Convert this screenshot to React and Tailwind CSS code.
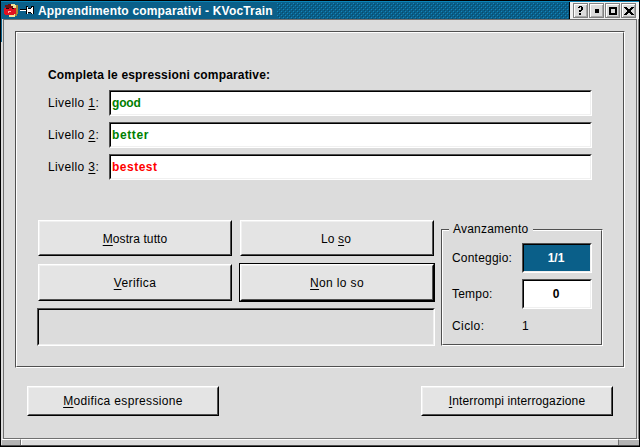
import React from "react";

const font = "font-['Liberation_Sans',Arial,sans-serif]";

function Label({ children, bold, className = "" }) {
  return (
    <span className={`inline-block whitespace-nowrap text-[12px] leading-[14px] ${bold ? "font-bold" : ""} ${className}`}>
      {children}
    </span>
  );
}

function U({ children }) {
  return <span className="underline underline-offset-2 decoration-1">{children}</span>;
}

function Sunken({ className = "", inner = "bg-white", children }) {
  return (
    <div className={`border border-t-[#505050] border-l-[#505050] border-r-white border-b-white ${className}`}>
      <div className={`flex h-full items-center border border-t-black border-l-black border-r-[#f0f0f0] border-b-[#f0f0f0] ${inner}`}>
        {children}
      </div>
    </div>
  );
}

function Button({ className = "", children }) {
  return (
    <button className={`block border border-t-white border-l-white border-r-black border-b-black ${className}`}>
      <span className="flex h-full items-center justify-center border border-t-[#f0f0f0] border-l-[#f0f0f0] border-r-[#505050] border-b-[#505050] bg-[#e4e4e4]">
        {children}
      </span>
    </button>
  );
}

function Field({ n, value, color }) {
  return (
    <div className="flex h-[26px] items-center">
      <Label className="w-[61px] tracking-[0.37px]">
        Livello <U>{n}</U>:
      </Label>
      <Sunken className="h-[26px] w-[483px]" inner="bg-white pl-px">
        <Label bold className={color}>{value}</Label>
      </Sunken>
    </div>
  );
}

function TitleButton({ children }) {
  return (
    <div className="flex h-[15px] w-[15px] items-center justify-center border border-[#808080] bg-[#dcdcdc]">
      <svg width="13" height="13" viewBox="0 0 13 13" shapeRendering="crispEdges">
        <path d="M0 0H13V1H1V13H0Z" fill="#fff" />
        <path d="M12 1H13V13H1V12H12Z" fill="#a8a8a8" />
        {children}
      </svg>
    </div>
  );
}

function TitleBar() {
  return (
    <div className="flex h-[18px] border-t border-t-[#0a85b8] bg-[#0a5f89]">
      <svg className="ml-[2px]" width="34" height="16" viewBox="3 2 34 16" shapeRendering="crispEdges">
        <path d="M9 5L12 4L18 5L17 15L14 17H9Z" fill="#f2e49a" />
        <path d="M16 5H18V14H17V16H15V14H16Z" fill="#a88732" />
        <path d="M5 5H8V4H11V6H13V8H6V7H5Z" fill="#701010" />
        <path d="M4 8H16V14H14V15H5V14H4Z" fill="#e01020" />
        <path d="M6 8H9V9H6ZM12 8H14V9H12Z" fill="#200808" />
        <path d="M8 11H11V12H9V13H8Z" fill="#ffb0a8" />
        <path d="M20 9H26V6H28V8H31V6H34V14H31V13H28V14H26V11H20Z" fill="#000" />
        <path d="M20 10H26V11H20ZM27 7H28V14H27ZM28 9H31V12H28ZM32 7H33V14H32ZM31 8H32V13H31Z" fill="#fff" />
      </svg>
      <Label bold className="ml-px mt-[2px] w-[239px] tracking-[0.17px] text-white">
        Apprendimento comparativi - KVocTrain
      </Label>
      <svg className="mt-px" width="292" height="16" shapeRendering="crispEdges">
        <defs>
          <pattern id="grip" width="4" height="4" patternUnits="userSpaceOnUse">
            <path d="M0 0H1V1H0ZM2 2H3V3H2Z" fill="#1487bd" />
            <path d="M1 1H2V2H1ZM3 3H4V4H3Z" fill="#084a6b" />
          </pattern>
        </defs>
        <rect width="292" height="16" fill="url(#grip)" />
      </svg>
      <div className="flex flex-1 gap-px border-l border-l-black bg-[#f0f0f0] pl-[3px] pt-px">
        <TitleButton>
          <path d="M4 3H5V2H8V3H9V6H8V7H7V8H5V6H7V3H6V4H4ZM5 9H7V11H5Z" fill="#000" />
        </TitleButton>
        <TitleButton>
          <path d="M5 5H9V9H5Z" fill="#000" />
        </TitleButton>
        <TitleButton>
          <path fillRule="evenodd" d="M3 3H11V11H3ZM5 5V9H9V5Z" fill="#000" />
        </TitleButton>
        <TitleButton>
          <path d="M2 3H5V4H6V5H8V4H9V3H12V4H11V5H10V6H9V8H10V9H11V10H12V11H9V10H8V9H6V10H5V11H2V10H3V9H4V8H5V6H4V5H3V4H2Z" fill="#000" />
        </TitleButton>
      </div>
    </div>
  );
}

function Progress() {
  return (
    <div className="relative ml-[6px] mt-[9px] h-[117px] w-[162px] border border-t-[#505050] border-l-[#505050] border-r-white border-b-white">
      <div className="h-full border border-t-white border-l-white border-r-[#505050] border-b-[#505050] pl-[9px] pt-[12px]">
        <div className="flex h-[30px] items-center">
          <Label className="w-[70px] tracking-[0.2px]">Conteggio:</Label>
          <Sunken className="h-[30px] w-[70px]" inner="justify-center bg-[#0a5f89] pr-[2px] text-white">
            <Label bold>1/1</Label>
          </Sunken>
        </div>
        <div className="mt-[6px] flex h-[30px] items-center">
          <Label className="w-[70px] tracking-[0.2px]">Tempo:</Label>
          <Sunken className="h-[30px] w-[70px]" inner="justify-center bg-white pr-[2px]">
            <Label bold>0</Label>
          </Sunken>
        </div>
        <div className="mt-[10px] flex">
          <Label className="w-[70px] tracking-[0.4px]">Ciclo:</Label>
          <Label>1</Label>
        </div>
      </div>
      <div className="absolute left-[7px] top-[-8px] flex h-[15px] w-[84px] bg-[#dcdcdc] pl-[4px]">
        <Label className="tracking-[0.2px]">Avanzamento</Label>
      </div>
    </div>
  );
}

export default function App() {
  return (
    <div className={`flex h-[447px] w-[640px] flex-col overflow-hidden border border-black bg-[#dcdcdc] text-black ${font}`}>
      <TitleBar />
      <div className="flex h-[420px]">
        <div className="w-[2px] border-r border-r-[#dcdcdc] bg-[#dcdcdc]">
          <div className="h-[23px] bg-[#0a5f89]" />
        </div>
        <div className="h-[420px] w-[634px] border border-[#707070] pl-[11px] pt-[11px]">
          <div className="h-[337px] w-[610px] border border-t-[#505050] border-l-[#505050] border-r-white border-b-white">
            <div className="h-full border border-t-white border-l-white border-r-[#505050] border-b-[#505050] pt-[35px]">
              <div className="flex flex-col gap-[6px] pl-[31px]">
                <Label bold className="mb-[2px] h-[14px] tracking-[0.17px]">Completa le espressioni comparative:</Label>
                <Field n="1" value="good" color="tracking-[-0.2px] text-[#008000]" />
                <Field n="2" value="better" color="tracking-[0.6px] text-[#008000]" />
                <Field n="3" value="bestest" color="tracking-[0.5px] text-[#ff0000]" />
              </div>
              <div className="mt-[40px] flex pl-[20px]">
                <div className="w-[398px]">
                  <div className="flex gap-[8px] pl-px">
                    <Button className="h-[36px] w-[194px]"><Label className="mt-[2px] tracking-[0.1px]"><U>M</U>ostra tutto</Label></Button>
                    <Button className="h-[36px] w-[194px]"><Label className="mr-[2px] mt-[2px] tracking-[0.1px]">Lo <U>s</U>o</Label></Button>
                  </div>
                  <div className="mt-[7px] flex h-[39px] gap-[7px] pl-px">
                    <Button className="mt-px h-[37px] w-[194px]"><Label className="tracking-[0.4px]"><U>V</U>erifica</Label></Button>
                    <div className="h-[39px] w-[196px] border border-black">
                      <Button className="h-[37px] w-[194px]"><Label className="tracking-[0.35px]"><U>N</U>on lo so</Label></Button>
                    </div>
                  </div>
                  <Sunken className="mt-[6px] h-[38px] w-[398px]" inner="bg-[#dcdcdc]" />
                </div>
                <Progress />
              </div>
            </div>
          </div>
          <div className="mt-[18px] flex gap-[202px] pl-[12px]">
            <Button className="h-[30px] w-[192px]"><Label className="tracking-[0.35px]"><U>M</U>odifica espressione</Label></Button>
            <Button className="h-[30px] w-[192px]"><Label className="tracking-[0.12px]"><U>I</U>nterrompi interrogazione</Label></Button>
          </div>
        </div>
        <div className="flex-1 border-r border-r-[#808080] bg-[#e8e8e8]" />
      </div>
      <div className="flex h-[7px] border-b border-b-[#505050] pl-px">
        <div className="w-[19px] border-r border-t border-r-[#707070] border-t-white bg-[#b4b4b4]" />
        <div className="flex-1 border-l border-t border-white" />
        <div className="w-[21px] border-l border-t border-l-[#707070] border-t-white bg-[#b4b4b4]" />
      </div>
    </div>
  );
}
